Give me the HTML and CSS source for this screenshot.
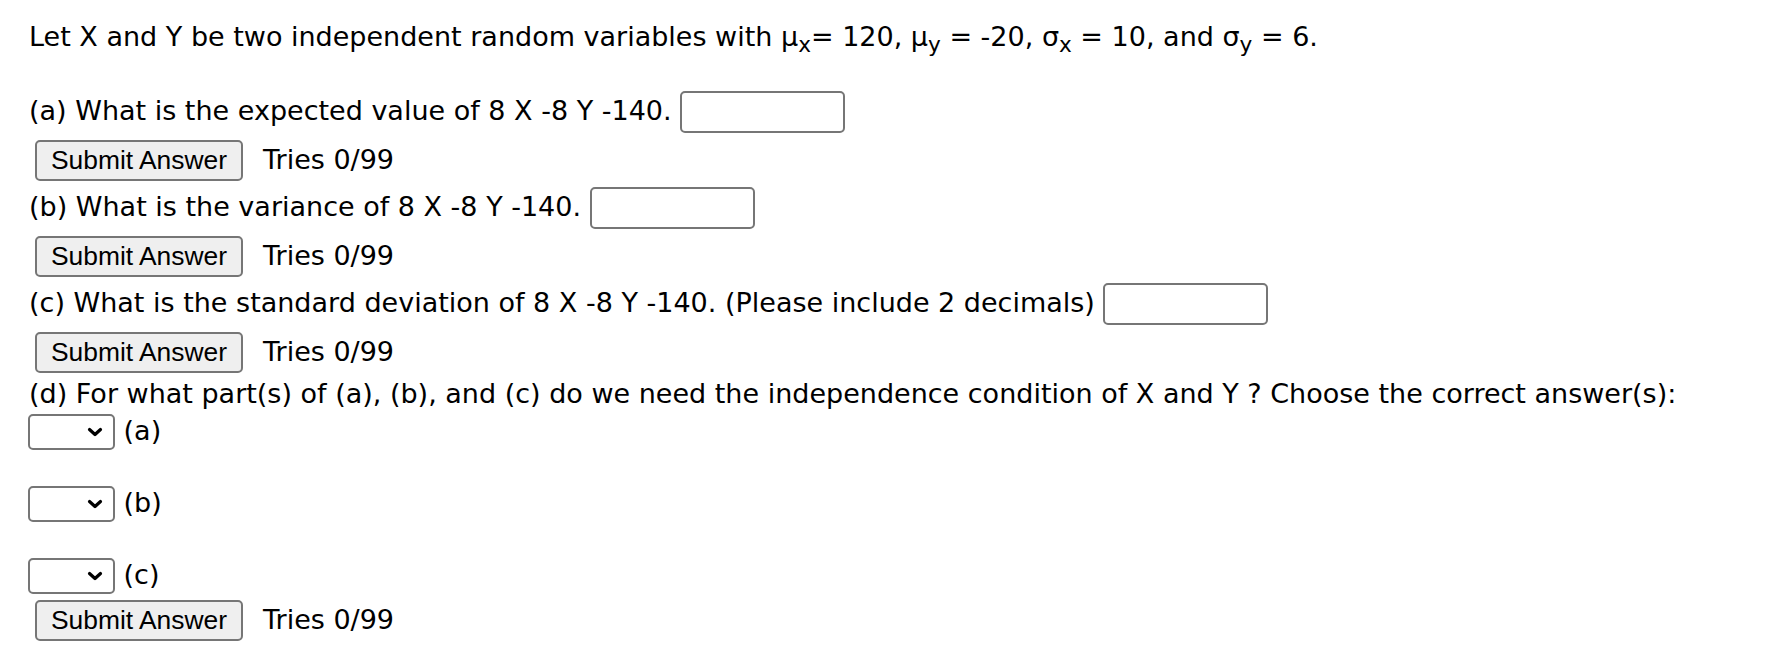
FILE: index.html
```html
<!DOCTYPE html>
<html>
<head>
<meta charset="utf-8">
<link rel="stylesheet" href="styles.css">
</head>
<body>
<div class="problem">
  <p class="intro">Let X and Y be two independent random variables with μ<sub>x</sub>= 120, μ<sub>y</sub> = -20, σ<sub>x</sub> = 10, and σ<sub>y</sub> = 6.</p>

  <div class="q"><span class="txt">(a) What is the expected value of 8 X -8 Y -140. </span><input class="ans" type="text"></div>
  <div class="sub"><button class="btn">Submit Answer</button><span class="tries">Tries 0/99</span></div>

  <div class="q"><span class="txt">(b) What is the variance of 8 X -8 Y -140. </span><input class="ans" type="text"></div>
  <div class="sub"><button class="btn">Submit Answer</button><span class="tries">Tries 0/99</span></div>

  <div class="q"><span class="txt">(c) What is the standard deviation of 8 X -8 Y -140. (Please include 2 decimals) </span><input class="ans" type="text"></div>
  <div class="sub"><button class="btn">Submit Answer</button><span class="tries">Tries 0/99</span></div>

  <div class="qd"><span class="txt">(d) For what part(s) of (a), (b), and (c) do we need the independence condition of X and Y ? Choose the correct answer(s):</span></div>
  <div class="opt"><span class="selwrap"><select class="sel"><option></option><option>Yes</option><option>No</option></select><svg class="chev" width="16" height="10" viewBox="0 0 16 10"><path d="M2.5 2.5 L8 7.5 L13.5 2.5" fill="none" stroke="#000" stroke-width="3.2" stroke-linecap="round" stroke-linejoin="round"/></svg></span><span class="txt"> (a)</span></div>
  <div class="blank"></div>
  <div class="opt"><span class="selwrap"><select class="sel"><option></option><option>Yes</option><option>No</option></select><svg class="chev" width="16" height="10" viewBox="0 0 16 10"><path d="M2.5 2.5 L8 7.5 L13.5 2.5" fill="none" stroke="#000" stroke-width="3.2" stroke-linecap="round" stroke-linejoin="round"/></svg></span><span class="txt"> (b)</span></div>
  <div class="blank"></div>
  <div class="opt"><span class="selwrap"><select class="sel"><option></option><option>Yes</option><option>No</option></select><svg class="chev" width="16" height="10" viewBox="0 0 16 10"><path d="M2.5 2.5 L8 7.5 L13.5 2.5" fill="none" stroke="#000" stroke-width="3.2" stroke-linecap="round" stroke-linejoin="round"/></svg></span><span class="txt"> (c)</span></div>
  <div class="sub last"><button class="btn">Submit Answer</button><span class="tries">Tries 0/99</span></div>
</div>
</body>
</html>
```
FILE: styles.css
```css
html, body {
  margin: 0;
  padding: 0;
  background: #ffffff;
}
body {
  font-family: Verdana, "DejaVu Sans", sans-serif;
  font-size: 27px;
  color: #000000;
}
.problem {
  padding: 0 0 0 29px;
}
.intro {
  margin: 0;
  padding-top: 19px;
  line-height: 36px;
  height: 69px;
}
.intro sub {
  font-size: 0.8em;
  vertical-align: -0.3em;
  line-height: 0;
}
.txt {
  white-space: pre;
  padding-bottom: 4px;
}
.q {
  height: 48px;
  display: flex;
  align-items: center;
}
.ans {
  box-sizing: border-box;
  width: 165px;
  height: 42px;
  border: 2px solid #767676;
  border-radius: 5px;
  margin: 0;
  padding: 0 6px;
  background: #ffffff;
  font-size: 24px;
}
.sub {
  height: 48px;
  display: flex;
  align-items: center;
}
.btn {
  box-sizing: border-box;
  margin-left: 6px;
  width: 208px;
  height: 41px;
  padding: 0 12px;
  border: 2px solid #767676;
  border-radius: 5px;
  background: #efefef;
  font-family: Arial, "Liberation Sans", sans-serif;
  font-size: 26.4px;
  color: #000000;
}
.tries {
  margin-left: 20px;
  padding-bottom: 2px;
}
.qd {
  height: 38px;
  display: flex;
  align-items: center;
}
.opt {
  height: 36px;
  display: flex;
  align-items: center;
}
.selwrap {
  position: relative;
  display: inline-block;
  width: 87px;
  height: 36px;
  margin-left: -1px;
}
.sel {
  box-sizing: border-box;
  display: block;
  width: 87px;
  height: 36px;
  border: 2px solid #767676;
  border-radius: 5px;
  background: #ffffff;
  font-size: 24px;
  appearance: none;
  -webkit-appearance: none;
}
.chev {
  position: absolute;
  left: 59px;
  top: 13px;
  pointer-events: none;
}
.blank {
  height: 36px;
}
.sub.last {
  height: 48px;
  margin-top: 2px;
}
```
